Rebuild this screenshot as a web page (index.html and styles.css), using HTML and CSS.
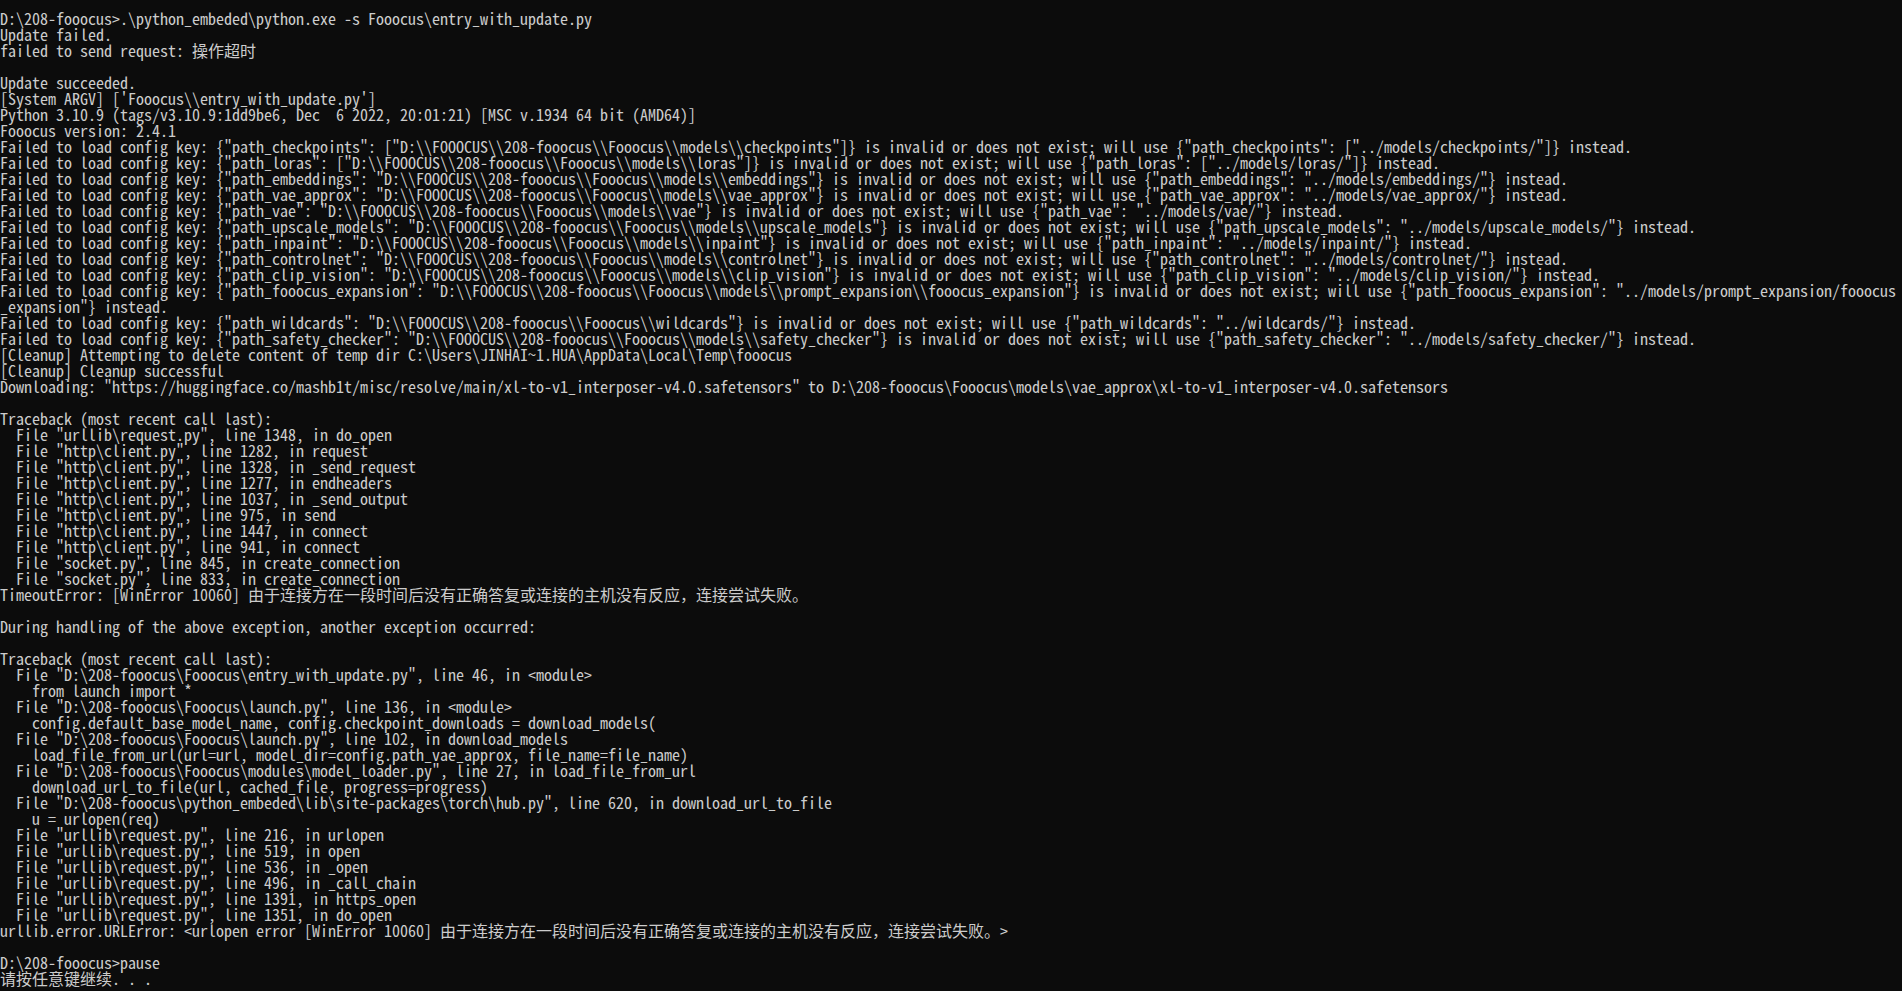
FILE: index.html
```html
<!DOCTYPE html>
<html lang="zh-CN">
<head>
    <meta charset="UTF-8">
    <title>命令提示符</title>
    <link rel="stylesheet" href="styles.css">
</head>
<body>
<pre class="console">D:\208-fooocus&gt;.\python_embeded\python.exe -s Fooocus\entry_with_update.py
Update failed.
failed to send request: <span class="cjk">操作超时</span>

Update succeeded.
[System ARGV] ['Fooocus\\entry_with_update.py']
Python 3.10.9 (tags/v3.10.9:1dd9be6, Dec  6 2022, 20:01:21) [MSC v.1934 64 bit (AMD64)]
Fooocus version: 2.4.1
Failed to load config key: {"path_checkpoints": ["D:\\FOOOCUS\\208-fooocus\\Fooocus\\models\\checkpoints"]} is invalid or does not exist; will use {"path_checkpoints": ["../models/checkpoints/"]} instead.
Failed to load config key: {"path_loras": ["D:\\FOOOCUS\\208-fooocus\\Fooocus\\models\\loras"]} is invalid or does not exist; will use {"path_loras": ["../models/loras/"]} instead.
Failed to load config key: {"path_embeddings": "D:\\FOOOCUS\\208-fooocus\\Fooocus\\models\\embeddings"} is invalid or does not exist; will use {"path_embeddings": "../models/embeddings/"} instead.
Failed to load config key: {"path_vae_approx": "D:\\FOOOCUS\\208-fooocus\\Fooocus\\models\\vae_approx"} is invalid or does not exist; will use {"path_vae_approx": "../models/vae_approx/"} instead.
Failed to load config key: {"path_vae": "D:\\FOOOCUS\\208-fooocus\\Fooocus\\models\\vae"} is invalid or does not exist; will use {"path_vae": "../models/vae/"} instead.
Failed to load config key: {"path_upscale_models": "D:\\FOOOCUS\\208-fooocus\\Fooocus\\models\\upscale_models"} is invalid or does not exist; will use {"path_upscale_models": "../models/upscale_models/"} instead.
Failed to load config key: {"path_inpaint": "D:\\FOOOCUS\\208-fooocus\\Fooocus\\models\\inpaint"} is invalid or does not exist; will use {"path_inpaint": "../models/inpaint/"} instead.
Failed to load config key: {"path_controlnet": "D:\\FOOOCUS\\208-fooocus\\Fooocus\\models\\controlnet"} is invalid or does not exist; will use {"path_controlnet": "../models/controlnet/"} instead.
Failed to load config key: {"path_clip_vision": "D:\\FOOOCUS\\208-fooocus\\Fooocus\\models\\clip_vision"} is invalid or does not exist; will use {"path_clip_vision": "../models/clip_vision/"} instead.
Failed to load config key: {"path_fooocus_expansion": "D:\\FOOOCUS\\208-fooocus\\Fooocus\\models\\prompt_expansion\\fooocus_expansion"} is invalid or does not exist; will use {"path_fooocus_expansion": "../models/prompt_expansion/fooocus
_expansion"} instead.
Failed to load config key: {"path_wildcards": "D:\\FOOOCUS\\208-fooocus\\Fooocus\\wildcards"} is invalid or does not exist; will use {"path_wildcards": "../wildcards/"} instead.
Failed to load config key: {"path_safety_checker": "D:\\FOOOCUS\\208-fooocus\\Fooocus\\models\\safety_checker"} is invalid or does not exist; will use {"path_safety_checker": "../models/safety_checker/"} instead.
[Cleanup] Attempting to delete content of temp dir C:\Users\JINHAI~1.HUA\AppData\Local\Temp\fooocus
[Cleanup] Cleanup successful
Downloading: "https://huggingface.co/mashb1t/misc/resolve/main/xl-to-v1_interposer-v4.0.safetensors" to D:\208-fooocus\Fooocus\models\vae_approx\xl-to-v1_interposer-v4.0.safetensors

Traceback (most recent call last):
  File "urllib\request.py", line 1348, in do_open
  File "http\client.py", line 1282, in request
  File "http\client.py", line 1328, in _send_request
  File "http\client.py", line 1277, in endheaders
  File "http\client.py", line 1037, in _send_output
  File "http\client.py", line 975, in send
  File "http\client.py", line 1447, in connect
  File "http\client.py", line 941, in connect
  File "socket.py", line 845, in create_connection
  File "socket.py", line 833, in create_connection
TimeoutError: [WinError 10060] <span class="cjk">由于连接方在一段时间后没有正确答复或连接的主机没有反应，连接尝试失败。</span>

During handling of the above exception, another exception occurred:

Traceback (most recent call last):
  File "D:\208-fooocus\Fooocus\entry_with_update.py", line 46, in &lt;module&gt;
    from launch import *
  File "D:\208-fooocus\Fooocus\launch.py", line 136, in &lt;module&gt;
    config.default_base_model_name, config.checkpoint_downloads = download_models(
  File "D:\208-fooocus\Fooocus\launch.py", line 102, in download_models
    load_file_from_url(url=url, model_dir=config.path_vae_approx, file_name=file_name)
  File "D:\208-fooocus\Fooocus\modules\model_loader.py", line 27, in load_file_from_url
    download_url_to_file(url, cached_file, progress=progress)
  File "D:\208-fooocus\python_embeded\lib\site-packages\torch\hub.py", line 620, in download_url_to_file
    u = urlopen(req)
  File "urllib\request.py", line 216, in urlopen
  File "urllib\request.py", line 519, in open
  File "urllib\request.py", line 536, in _open
  File "urllib\request.py", line 496, in _call_chain
  File "urllib\request.py", line 1391, in https_open
  File "urllib\request.py", line 1351, in do_open
urllib.error.URLError: &lt;urlopen error [WinError 10060] <span class="cjk">由于连接方在一段时间后没有正确答复或连接的主机没有反应，连接尝试失败。</span>&gt;

D:\208-fooocus&gt;pause
<span class="cjk">请按任意键继续</span>. . .</pre>
</body>
</html>
```

FILE: styles.css
```css
html, body {
    margin: 0;
    height: 100%;
    background-color: #0c0c0c;
}
.console {
    margin: 0;
    padding: 10px 0 0 0;
    font-family: "Noto Sans Mono CJK SC", "Liberation Mono", monospace;
    font-size: 16px;
    line-height: 16px;
    color: #cccccc;
    white-space: pre;
}
.cjk {
    font-family: "Noto Sans Mono CJK SC", "Noto Sans CJK SC", sans-serif;
}
```
